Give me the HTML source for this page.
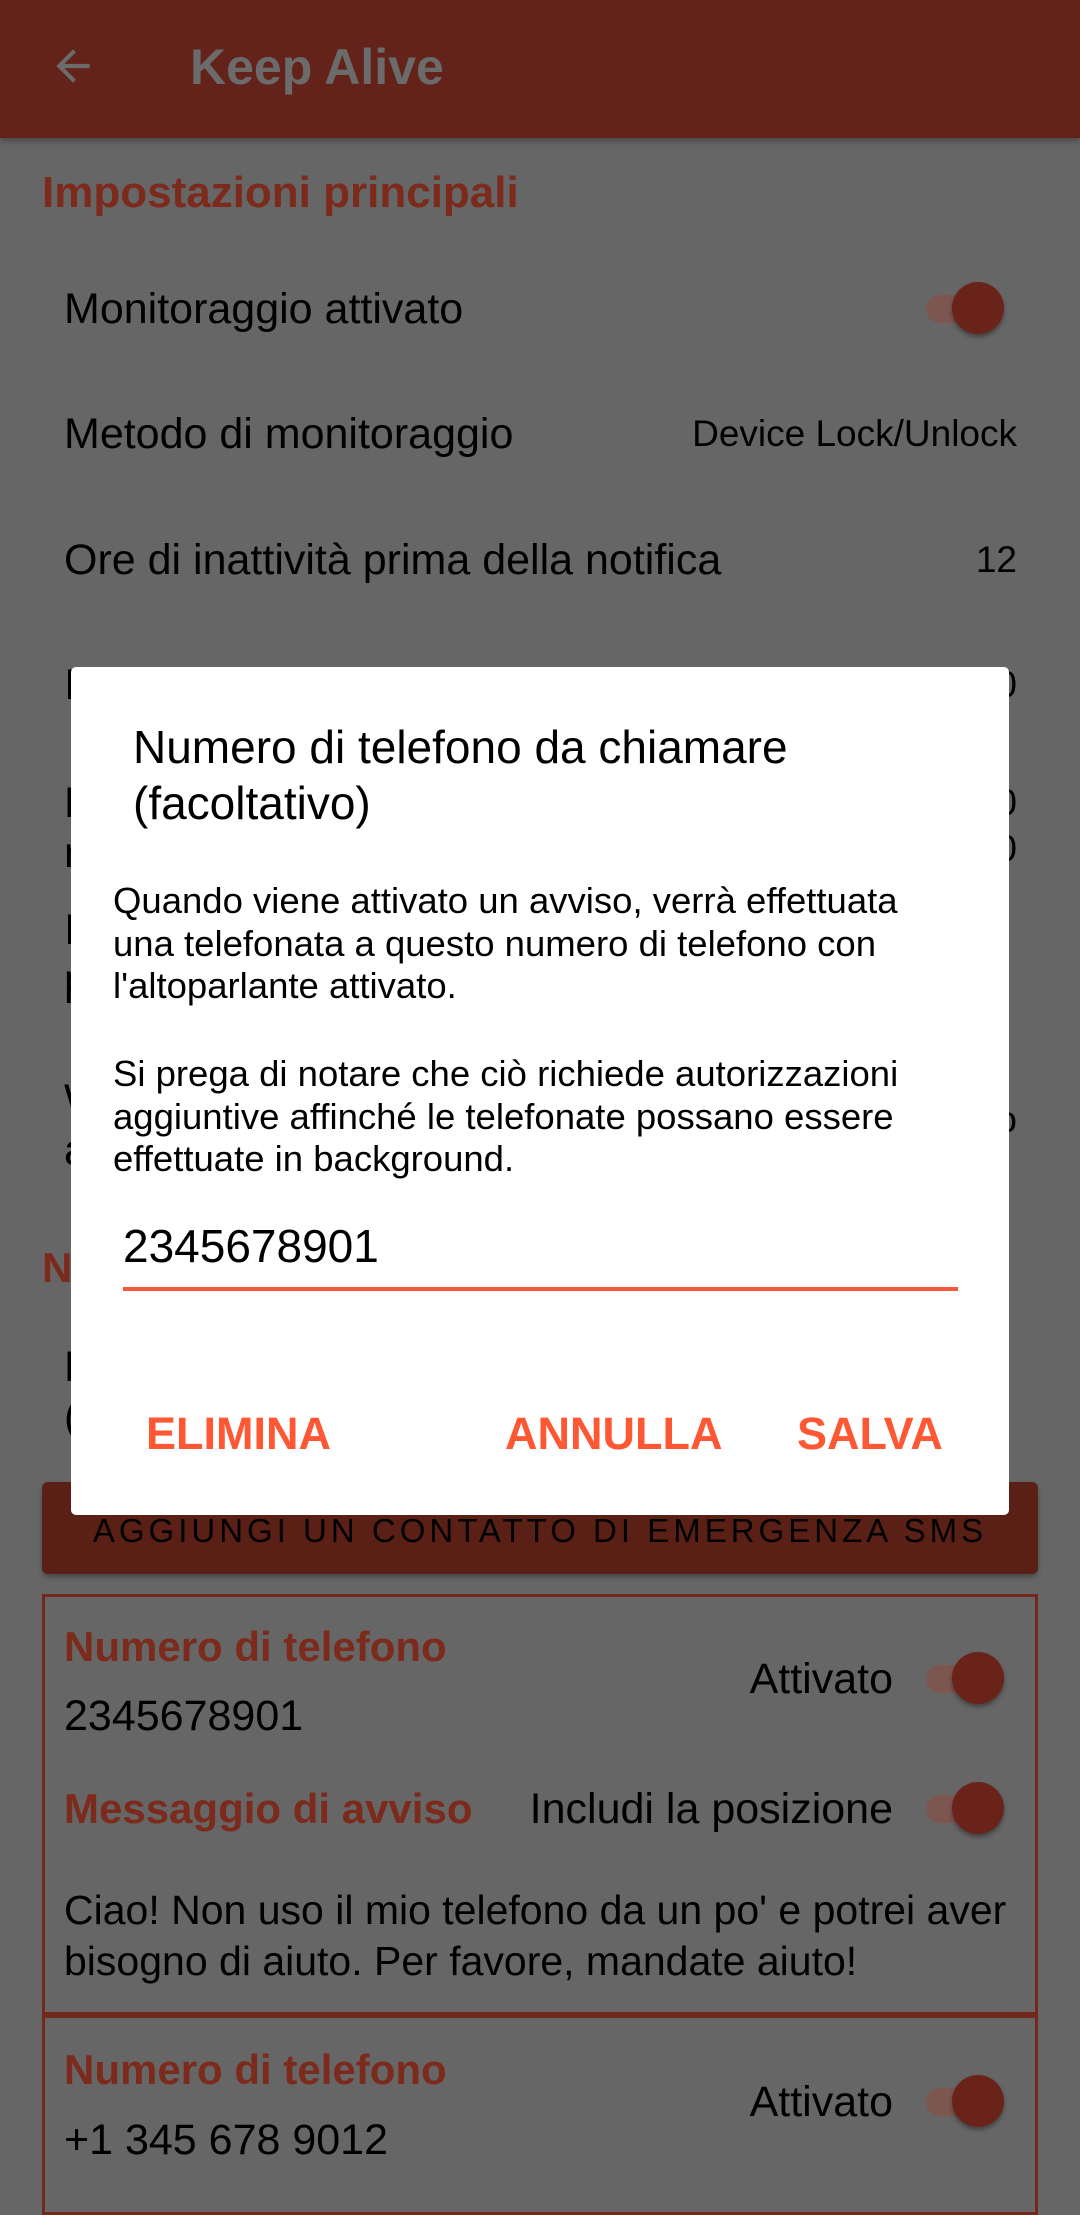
<!DOCTYPE html>
<html><head><meta charset="utf-8"><style>
*{margin:0;padding:0;box-sizing:border-box}
body{width:1080px;height:2136px;overflow:hidden;background:#666;font-family:"Liberation Sans",sans-serif;position:relative;color:#000}
.a{position:absolute;white-space:nowrap}
.t{font-size:43px;line-height:50px}
.r{right:63px;font-size:37px;line-height:46px}
.h{font-weight:bold;color:#7b2a1c;font-size:42px;line-height:50px}
.tg{position:absolute;width:84px;height:54px}
.tg .tr{position:absolute;left:4px;top:13px;width:68px;height:28px;border-radius:14px;background:#7d5650}
.tg .th{position:absolute;left:30px;top:0;width:52px;height:52px;border-radius:50%;background:#6a2318;box-shadow:0 3px 4px rgba(0,0,0,.35)}
.dl{position:absolute;left:71px;top:667px;width:938px;height:848px;background:#fff;border-radius:5px}
.db{position:absolute;color:#fe5733;font-weight:bold;font-size:45px;line-height:52px}
</style></head><body>
<div class="a" style="left:0;top:0;width:1080px;height:138px;background:#63231a;box-shadow:0 3px 6px rgba(0,0,0,.3)"></div>
<svg class="a" style="left:48px;top:41px" width="50" height="50" viewBox="0 0 24 24"><path d="M20 11H7.83l5.59-5.59L12 4l-8 8 8 8 1.41-1.41L7.83 13H20z" fill="#6b6b6b"/></svg>
<div class="a" style="left:190px;top:37px;font-size:50px;line-height:60px;font-weight:bold;color:#6b6b6b">Keep Alive</div>

<div class="a h" style="left:42px;top:168px;font-size:44px">Impostazioni principali</div>
<div class="a t" style="left:64px;top:284px">Monitoraggio attivato</div>
<div class="tg" style="left:922px;top:282px"><div class="tr"></div><div class="th"></div></div>
<div class="a t" style="left:64px;top:409px">Metodo di monitoraggio</div>
<div class="a r" style="top:411px">Device Lock/Unlock</div>
<div class="a t" style="left:64px;top:535px">Ore di inattività prima della notifica</div>
<div class="a r" style="top:537px">12</div>
<div class="a t" style="left:64px;top:660px">Intervallo</div><div class="a r" style="top:662px">0</div>
<div class="a t" style="left:64px;top:778px">Periodo<br>minuti</div><div class="a r" style="top:780px">0<br>0</div>
<div class="a t" style="left:64px;top:905px">Invia<br>posizione</div>
<div class="a t" style="left:64px;top:1075px">Webhook<br>avviso</div><div class="a r" style="top:1097px">o</div>
<div class="a h" style="left:42px;top:1243px">Notifiche</div>
<div class="a t" style="left:64px;top:1342px">Numero<br>(facoltativo)</div>

<div class="a" style="left:42px;top:1482px;width:996px;height:92px;background:#5a1f15;border-radius:6px;box-shadow:0 3px 5px rgba(0,0,0,.3)"></div>
<div class="a" style="left:42px;top:1508px;width:996px;text-align:center;font-size:33px;line-height:46px;letter-spacing:4px">AGGIUNGI UN CONTATTO DI EMERGENZA SMS</div>

<div class="a" style="left:42px;top:1594px;width:996px;height:421px;border:3px solid #72291c"></div>
<div class="a h" style="left:64px;top:1622px">Numero di telefono</div>
<div class="a t" style="right:187px;top:1654px">Attivato</div>
<div class="tg" style="left:922px;top:1652px"><div class="tr"></div><div class="th"></div></div>
<div class="a t" style="left:64px;top:1691px">2345678901</div>
<div class="a h" style="left:64px;top:1784px">Messaggio di avviso</div>
<div class="a t" style="right:187px;top:1784px">Includi la posizione</div>
<div class="tg" style="left:922px;top:1782px"><div class="tr"></div><div class="th"></div></div>
<div class="a t" style="left:64px;top:1885px;line-height:51px;font-size:41px">Ciao! Non uso il mio telefono da un po' e potrei aver<br>bisogno di aiuto. Per favore, mandate aiuto!</div>
<div class="a" style="left:42px;top:2015px;width:996px;height:200px;border:3px solid #72291c"></div>
<div class="a h" style="left:64px;top:2045px">Numero di telefono</div>
<div class="a t" style="right:187px;top:2077px">Attivato</div>
<div class="tg" style="left:922px;top:2075px"><div class="tr"></div><div class="th"></div></div>
<div class="a t" style="left:64px;top:2115px">+1 345 678 9012</div>

<div class="dl"></div>
<div class="a" style="left:133px;top:719px;font-size:46px;line-height:56px;font-weight:500">Numero di telefono da chiamare<br>(facoltativo)</div>
<div class="a" style="left:113px;top:880px;font-size:36.5px;line-height:42.5px">Quando viene attivato un avviso, verrà effettuata<br>una telefonata a questo numero di telefono con<br>l'altoparlante attivato.</div>
<div class="a" style="left:113px;top:1053px;font-size:36.5px;line-height:42.5px">Si prega di notare che ciò richiede autorizzazioni<br>aggiuntive affinché le telefonate possano essere<br>effettuate in background.</div>
<div class="a" style="left:123px;top:1220px;font-size:46px;line-height:52px">2345678901</div>
<div class="a" style="left:123px;top:1287px;width:835px;height:4px;background:#f4573a"></div>
<div class="db" style="left:146px;top:1408px">ELIMINA</div>
<div class="db" style="left:505px;top:1408px">ANNULLA</div>
<div class="db" style="left:797px;top:1408px">SALVA</div>
</body></html>
